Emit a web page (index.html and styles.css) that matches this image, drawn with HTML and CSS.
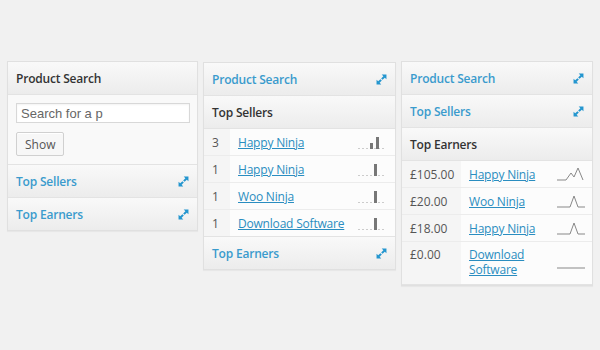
FILE: index.html
```html
<!DOCTYPE html>
<html>

<head>
    <title>Reports</title>
    <meta http-equiv="Content-Type" content="text/html; charset=UTF-8">
    <link rel="stylesheet" href="styles.css">
</head>

<body>
    <div class='boards'>
        <!-- search open -->
        <div class='board board-a'>
            <div class='bar'>
                <h3 class='title'>Product Search</h3>
            </div>
            <div class='search'>
                <input type='text' class='field' placeholder='Search for a p'>
                <button class='btn'>Show</button>
            </div>
            <div class='bar shut'>
                <h3 class='title'>Top Sellers</h3>
                <svg class='grow' viewBox='0 0 10 10'><path d='M5.2 0.5h4.3v4.3l-1.5-1.5-2 2-1.3-1.3 2-2zM4.8 9.5h-4.3v-4.3l1.5 1.5 2-2 1.3 1.3-2 2z' /></svg>
            </div>
            <div class='bar shut'>
                <h3 class='title'>Top Earners</h3>
                <svg class='grow' viewBox='0 0 10 10'><path d='M5.2 0.5h4.3v4.3l-1.5-1.5-2 2-1.3-1.3 2-2zM4.8 9.5h-4.3v-4.3l1.5 1.5 2-2 1.3 1.3-2 2z' /></svg>
            </div>
        </div>

        <!-- sellers open -->
        <div class='board board-b'>
            <div class='bar shut'>
                <h3 class='title'>Product Search</h3>
                <svg class='grow' viewBox='0 0 10 10'><path d='M5.2 0.5h4.3v4.3l-1.5-1.5-2 2-1.3-1.3 2-2zM4.8 9.5h-4.3v-4.3l1.5 1.5 2-2 1.3 1.3-2 2z' /></svg>
            </div>
            <div class='bar'>
                <h3 class='title'>Top Sellers</h3>
            </div>
            <table class='list'>
                <tr>
                    <td class='num'>3</td>
                    <td class='name'><a href='#'>Happy Ninja</a></td>
                    <td class='spark'><svg viewBox='0 0 28 14'><path class='dots' d='M0 13.5h28' /><rect x='12' y='8' width='3' height='6' /><rect x='18' y='2' width='3' height='12' /></svg></td>
                </tr>
                <tr>
                    <td class='num'>1</td>
                    <td class='name'><a href='#'>Happy Ninja</a></td>
                    <td class='spark'><svg viewBox='0 0 28 14'><path class='dots' d='M0 13.5h28' /><rect x='16' y='2' width='3' height='12' /></svg></td>
                </tr>
                <tr>
                    <td class='num'>1</td>
                    <td class='name'><a href='#'>Woo Ninja</a></td>
                    <td class='spark'><svg viewBox='0 0 28 14'><path class='dots' d='M0 13.5h28' /><rect x='16' y='2' width='3' height='12' /></svg></td>
                </tr>
                <tr>
                    <td class='num'>1</td>
                    <td class='name'><a href='#'>Download Software</a></td>
                    <td class='spark'><svg viewBox='0 0 28 14'><path class='dots' d='M0 13.5h28' /><rect x='16' y='2' width='3' height='12' /></svg></td>
                </tr>
            </table>
            <div class='bar shut'>
                <h3 class='title'>Top Earners</h3>
                <svg class='grow' viewBox='0 0 10 10'><path d='M5.2 0.5h4.3v4.3l-1.5-1.5-2 2-1.3-1.3 2-2zM4.8 9.5h-4.3v-4.3l1.5 1.5 2-2 1.3 1.3-2 2z' /></svg>
            </div>
        </div>

        <!-- earners open -->
        <div class='board board-c'>
            <div class='bar shut'>
                <h3 class='title'>Product Search</h3>
                <svg class='grow' viewBox='0 0 10 10'><path d='M5.2 0.5h4.3v4.3l-1.5-1.5-2 2-1.3-1.3 2-2zM4.8 9.5h-4.3v-4.3l1.5 1.5 2-2 1.3 1.3-2 2z' /></svg>
            </div>
            <div class='bar shut'>
                <h3 class='title'>Top Sellers</h3>
                <svg class='grow' viewBox='0 0 10 10'><path d='M5.2 0.5h4.3v4.3l-1.5-1.5-2 2-1.3-1.3 2-2zM4.8 9.5h-4.3v-4.3l1.5 1.5 2-2 1.3 1.3-2 2z' /></svg>
            </div>
            <div class='bar'>
                <h3 class='title'>Top Earners</h3>
            </div>
            <table class='list earn'>
                <tr>
                    <td class='num'>£105.00</td>
                    <td class='name'><a href='#'>Happy Ninja</a></td>
                    <td class='spark'><svg viewBox='0 0 28 14'><polyline points='0,13 9,13 14,6 17,10 21,1 26,13' /></svg></td>
                </tr>
                <tr>
                    <td class='num'>£20.00</td>
                    <td class='name'><a href='#'>Woo Ninja</a></td>
                    <td class='spark'><svg viewBox='0 0 28 14'><polyline points='0,13 13,13 17,2 21,13 28,13' /></svg></td>
                </tr>
                <tr>
                    <td class='num'>£18.00</td>
                    <td class='name'><a href='#'>Happy Ninja</a></td>
                    <td class='spark'><svg viewBox='0 0 28 14'><polyline points='0,13 13,13 17,2 21,13 28,13' /></svg></td>
                </tr>
                <tr class='tall'>
                    <td class='num'>£0.00</td>
                    <td class='name'><a href='#'>Download Software</a></td>
                    <td class='spark'><svg viewBox='0 0 28 14'><polyline points='0,12 28,12' /></svg></td>
                </tr>
            </table>
        </div>
    </div>
</body>

</html>
```

FILE: styles.css
```css
html,
body
{
    margin: 0;
    width: 100%;
    height: 100%;
}

body
{
    background-color: #f1f1f1;
    color: #333;
    font-family: "Open Sans", "Liberation Sans", sans-serif;
    font-size: 12px;
}

.boards
{
    display: flex;
    align-items: flex-start;
    gap: 5px;
    padding: 61px 0 0 7px;
}

.board
{
    background-color: #fbfbfb;
    border: 1px solid #e0e0e0;
    box-shadow: 0 1px 1px rgba(0, 0, 0, .04);
}

.board-a
{
    width: 189px;
}

.board-b
{
    width: 191px;
    margin-top: 1px;
}

.board-c
{
    width: 190px;
}

.bar
{
    display: flex;
    align-items: center;
    justify-content: space-between;
    height: 32px;
    padding: 0 8px;
    border-bottom: 1px solid #e3e3e3;
    background: linear-gradient(to bottom, #f9f9f9, #ececec);
}

.bar:last-child
{
    border-bottom: none;
}

.title
{
    margin: 0;
    font-size: 12px;
    font-weight: 600;
    letter-spacing: -.2px;
    color: #333;
}

.bar.shut .title
{
    color: #3a9bcd;
}

.grow
{
    width: 11px;
    height: 11px;
    fill: #2496cf;
}

.search
{
    padding: 8px 8px 8px 8px;
    border-bottom: 1px solid #e3e3e3;
    background-color: #f9f9f9;
}

.field
{
    display: block;
    box-sizing: border-box;
    width: 174px;
    height: 20px;
    margin: 0 0 9px 0;
    padding: 0 4px;
    border: 1px solid #d8d8d8;
    background-color: #fff;
    font-family: "Liberation Sans", Arial, sans-serif;
    font-size: 13px;
    box-shadow: inset 0 1px 2px rgba(0, 0, 0, .05);
}

.field::placeholder
{
    color: #666;
}

.btn
{
    display: block;
    height: 24px;
    padding: 0 8px;
    border: 1px solid #d0d0d0;
    border-radius: 2px;
    background-color: #f7f7f7;
    color: #555;
    font-family: "Open Sans", "Liberation Sans", sans-serif;
    font-size: 12px;
    box-shadow: 0 1px 0 #fff inset;
}

.list
{
    width: 100%;
    table-layout: fixed;
    border-collapse: collapse;
    border-bottom: 1px solid #e3e3e3;
}

.list td
{
    height: 26px;
    padding: 0;
    border-top: 1px solid #ececec;
    vertical-align: middle;
    font-size: 12px;
    color: #555;
}

.list tr:first-child td
{
    border-top: none;
}

.list .num
{
    width: 26px;
    padding-left: 8px;
    box-sizing: border-box;
    background-color: #f5f5f5;
}

.list.earn .num
{
    width: 59px;
}

.list .name
{
    padding-left: 8px;
    background-color: #fcfcfc;
}

.list .name a
{
    color: #2a8dc0;
    letter-spacing: -.2px;
}

.list .spark
{
    width: 37px;
    padding-right: 9px;
    box-sizing: border-box;
    background-color: #fcfcfc;
}

.list.earn .spark
{
    width: 35px;
    padding-right: 7px;
}

.spark svg
{
    display: block;
    width: 28px;
    height: 14px;
    fill: #777;
}

.spark .dots
{
    stroke: #ccc;
    stroke-dasharray: 2 2;
    stroke-width: 1;
}

.spark polyline
{
    fill: none;
    stroke: #888;
    stroke-width: 1;
}

.list tr.tall td
{
    height: 32px;
    padding-top: 5px;
    padding-bottom: 5px;
    vertical-align: top;
    line-height: 15px;
}

.list tr.tall .spark
{
    vertical-align: middle;
}
```
